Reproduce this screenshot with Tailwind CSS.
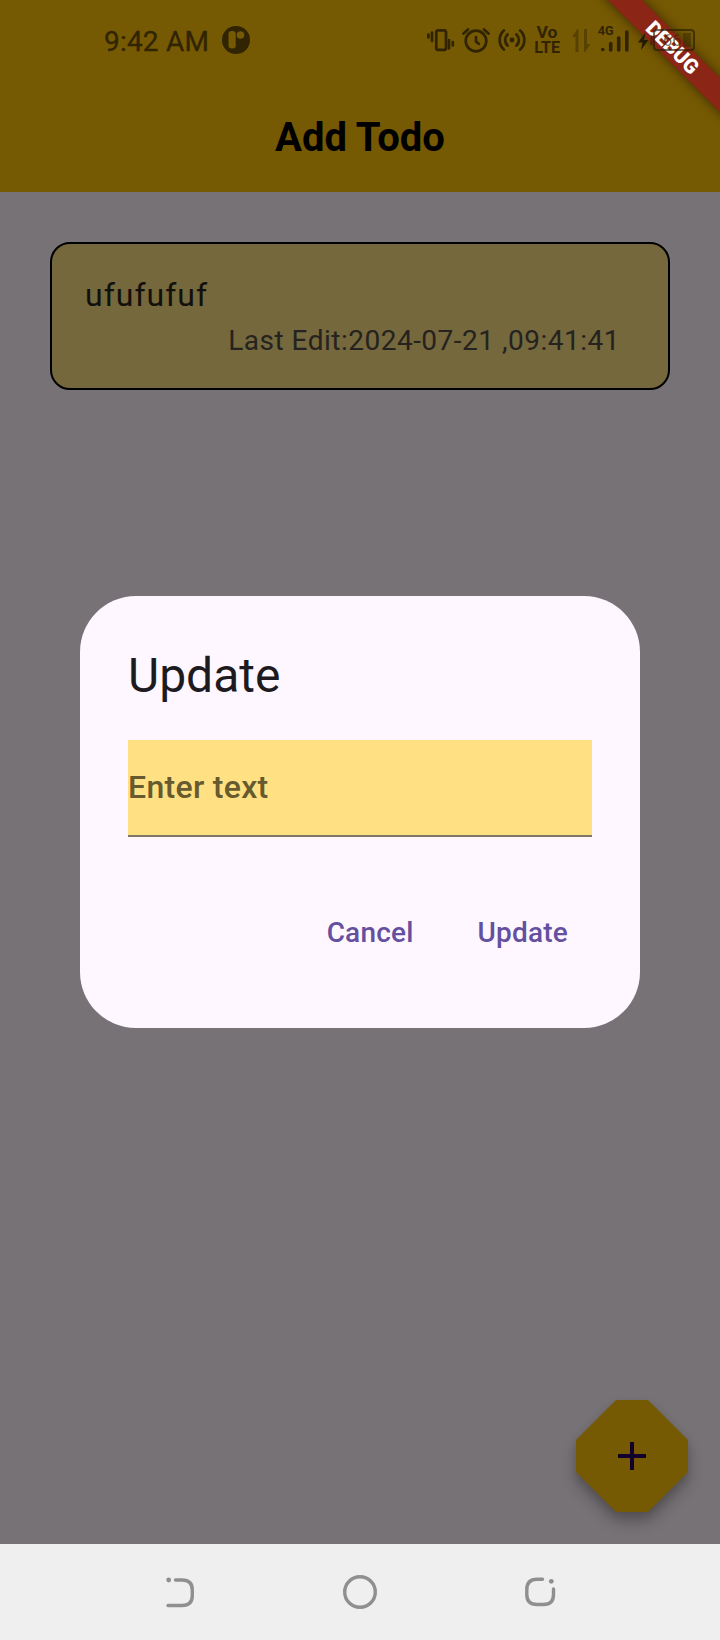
<!DOCTYPE html>
<html lang="en">
<head>
<meta charset="utf-8">
<title>Add Todo</title>
<script src="https://cdn.jsdelivr.net/npm/@tailwindcss/browser@4"></script>
</head>
<body class="w-[720px] h-[1640px] overflow-hidden bg-[#777276] font-['Roboto',sans-serif]">
<div class="relative flex h-[1640px] w-[720px] flex-col">
  <header class="h-[192px] bg-[#765903] flex flex-col">
    <div class="relative z-20 flex h-20 items-center pl-[104px] text-[#302402]">
      <span class="w-[118px] whitespace-nowrap pt-[3px] text-[28px] leading-[80px] tracking-[0.2px] [-webkit-text-stroke:0.3px_#302402]">9:42 AM</span>
      <svg class="h-7 w-7" viewBox="222 26 28 28"><circle cx="236" cy="40" r="14" fill="#302402"/><rect x="228.500" y="31" width="7.200" height="17.500" rx="3" fill="#765903"/><circle cx="240.500" cy="35" r="3.800" fill="#765903"/></svg>
      <svg class="ml-[174px] h-20 w-[296px]" viewBox="424 0 296 80" fill="none" stroke="#302402" stroke-linecap="round" stroke-width="2.700">
        <g><rect x="436.300" y="30.300" width="9.700" height="19.600" rx="2"/><path d="M428.400 34.500v3M432 32.500v8.500M449 40v8.500M452.800 42v3.500"/></g>
        <g><circle cx="476" cy="41" r="10.300"/><path d="M476 37v4.500l2.800 2.300M463.500 33.500l4.500-4M488.500 33.500l-4.500-4"/></g>
        <g><circle cx="512" cy="40" r="2.400" fill="#302402" stroke="none"/><path d="M507.500 34.500a7.500 7.500 0 0 0 0 11M516.500 34.500a7.500 7.500 0 0 1 0 11M503.800 30.500a13 13 0 0 0 0 19M520.200 30.500a13 13 0 0 1 0 19"/></g>
        <g fill="#302402" stroke="none" font-family="Roboto" font-weight="700" text-anchor="middle"><text x="547" y="37.800" font-size="15.800" textLength="21" lengthAdjust="spacingAndGlyphs">Vo</text><text x="547.200" y="52.800" font-size="16.200" textLength="26" lengthAdjust="spacingAndGlyphs">LTE</text></g>
        <g fill="#574202" stroke="none"><path d="M572 37l5.500-8h1V52h-3V37zM584 29h3V44h3.500l-5.500 8h-1z"/></g>
        <g stroke-width="3.600"><path d="M602.700 49.500h.1M610.700 43.500v6.500M618.700 38v12M626.800 32v18"/></g>
        <text x="597.800" y="35" fill="#302402" stroke="none" font-family="Roboto" font-weight="700" font-size="12.600">4G</text>
        <path d="M645.500 32.500l-7.500 10h4.500l-1.500 7.500 7.500-10h-4.500z" fill="#241b02" stroke="none"/>
        <g opacity=".62"><rect x="654" y="30" width="40" height="20" rx="3" stroke="#241b02" stroke-width="2"/><path d="M651.500 37v7" stroke="#241b02" stroke-width="2"/><rect x="683" y="33" width="8" height="14" fill="#302402" stroke="none" opacity=".7"/><text x="663" y="46" fill="#302402" stroke="none" font-family="Roboto" font-weight="400" font-size="16.500">66</text></g>
      </svg>
    </div>
    <h1 class="h-28 text-center text-[40px] font-bold leading-[116px] text-black"><span>Add Todo</span></h1>
  </header>

  <main class="h-[1352px] px-[50px] pt-[50px]">
    <article class="h-[148px] rounded-[20px] border-2 border-black bg-[#74683c] pl-[33px] pr-12 pt-[27px]">
      <p class="text-[32px] leading-[48px] tracking-[1px] text-[#12100c]">ufufufuf</p>
      <p class="pt-0.5 text-right text-[28px] leading-10 tracking-[0.5px] text-[#25221f]">Last Edit:2024-07-21 ,09:41:41</p>
    </article>
  </main>

  <nav class="h-24 bg-[#efefef]">
    <svg class="h-24 w-full" viewBox="0 1544 720 96" fill="none" stroke="#8f8f8f" stroke-width="3.400" stroke-linecap="round">
      <circle cx="168.700" cy="1580" r="2.400" fill="#8f8f8f" stroke="none"/><path d="M175.500 1580H182Q192.300 1580 192.300 1590V1595.500Q192.300 1605.500 182 1605.500H168"/>
      <circle cx="360" cy="1592" r="15.300"/>
      <path d="M542.500 1579.300H537Q526.800 1579.300 526.800 1589.500V1594.500Q526.800 1604.500 537 1604.500H543.500Q553.500 1604.500 553.500 1594.500V1589"/><circle cx="551.300" cy="1581.300" r="2.400" fill="#8f8f8f" stroke="none"/>
    </svg>
  </nav>

  <svg class="absolute left-[540px] top-[1370px] h-[174px] w-[180px]" viewBox="540 1370 180 174" role="img" aria-label="Add">
    <defs><filter id="soft" x="-30%" y="-30%" width="160%" height="160%"><feGaussianBlur stdDeviation="8"/></filter><filter id="wide" x="-30%" y="-30%" width="160%" height="160%"><feGaussianBlur stdDeviation="4"/></filter></defs>
    <path d="M616 1400H648L688 1440V1472L648 1512H616L576 1472V1440Z" transform="translate(0 10)" opacity=".22" filter="url(#soft)"/>
    <path d="M616 1400H648L688 1440V1472L648 1512H616L576 1472V1440Z" transform="translate(0 5)" opacity=".12" filter="url(#wide)"/>
    <path d="M616 1400H648L688 1440V1472L648 1512H616L576 1472V1440Z" fill="#765903"/>
    <path d="M618 1456H646M632 1442V1470" stroke="#14002c" stroke-width="4"/>
  </svg>

  <svg class="absolute right-0 top-0 z-10 h-[150px] w-[160px]" viewBox="560 0 160 150">
    <defs><filter id="band" x="-30%" y="-100%" width="160%" height="300%"><feGaussianBlur stdDeviation="6"/></filter></defs>
    <g transform="translate(672.500 47.500) rotate(45)">
      <rect x="-90" y="-12" width="180" height="24" opacity=".5" filter="url(#band)"/>
      <rect x="-90" y="-12" width="180" height="24" fill="#8b2616"/>
      <text y="7" text-anchor="middle" font-family="Roboto" font-weight="900" font-size="20.400" fill="#fff">DEBUG</text>
    </g>
  </svg>

  <section class="absolute left-20 top-[596px] flex h-[432px] w-[560px] flex-col rounded-[56px] bg-[#fef7ff] px-12 pt-12" role="dialog">
    <h2 class="h-24 text-[48px] leading-[64px] text-[#1d1b20]">Update</h2>
    <div class="h-[97px] border-b-2 border-[#7f7667] bg-[#ffe082] text-[32px] font-medium leading-[95px] text-[#665a2e]"><span class="tracking-[0.3px]">Enter text</span></div>
    <div class="mt-12 flex h-24 items-center justify-end gap-16 pr-6 text-[28px] font-medium tracking-[0.2px] text-[#65509f]">
      <span>Cancel</span><span>Update</span>
    </div>
  </section>
</div>
</body>
</html>
